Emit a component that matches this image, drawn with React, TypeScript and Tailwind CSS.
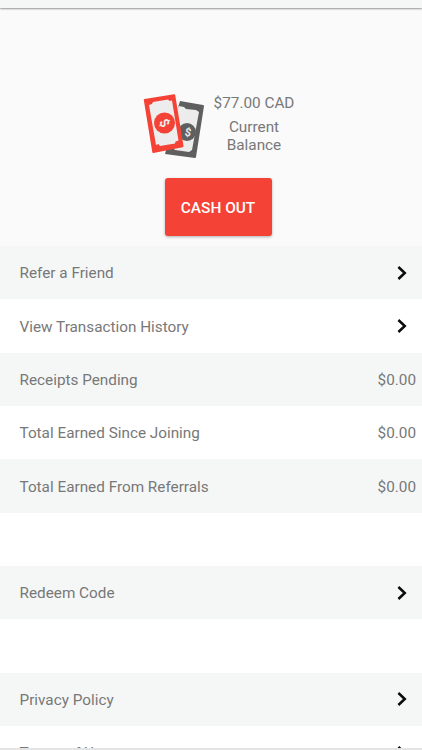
import React from "react";

function Chevron() {
  return (
    <svg width="12" height="16" viewBox="0 0 12 16" className="shrink-0">
      <path d="M2.4 2 L8.8 8 L2.4 14" fill="none" stroke="#0b0b0b" strokeWidth="2.5" />
    </svg>
  );
}

function Money() {
  return (
    <svg width="64" height="68" viewBox="0 0 64 68">
      <path d="M37 7 L60 11 Q61 11 61 12 L53 63 Q53 64 52 64 L22 60 L30 30 Z" fill="#5f5f5f" />
      <polygon points="36,12 41,13 43,15 53,16 56,18 49,56 46,58 32,56 30,54 26,30" fill="#ececec" />
      <circle cx="44" cy="38" r="9" fill="#5f5f5f" />
      <text x="45" y="42" fontSize="11" textAnchor="middle" fill="#ececec" fontFamily="Roboto, sans-serif" fontWeight="700" transform="rotate(10 45 38)">$</text>
      <path d="M1.5 5 L31 0.3 Q32 0.2 32.2 1 L40.5 52 Q40.6 53 39.6 53.2 L10.5 59 Q9.5 59.2 9.3 58.2 L0.8 6 Q0.7 5.2 1.5 5 Z" fill="#f44336" />
      <polygon points="6,11 9,10 10,8 25,5.5 26.5,7 29,6.5 35.5,46.5 32.5,47.5 32,49.5 17,52 15.5,50 13,51" fill="#ededed" />
      <circle cx="21.5" cy="29" r="10.5" fill="#f44336" />
      <text x="21.5" y="33.5" fontSize="13" textAnchor="middle" fill="#ededed" fontFamily="Roboto, sans-serif" fontWeight="700" transform="rotate(60 21.5 29)">$</text>
    </svg>
  );
}

function Row({ label, value, tinted }: { label: string; value?: string; tinted?: boolean }) {
  return (
    <div className={`flex h-[53.33px] items-center justify-between pl-[19.5px] ${value ? "pr-[6px]" : "pr-[14px]"} text-[15.3px] text-[#787878] ${tinted ? "bg-[#f5f7f7]" : "bg-white"}`}>
      <span className="pt-[2px]">{label}</span>
      {value ? <span className="pt-[2px]">{value}</span> : <Chevron />}
    </div>
  );
}

export default function App() {
  return (
    <div className="relative h-[750px] w-[422px] overflow-hidden bg-white font-['Roboto',sans-serif]">
      <div className="relative h-2 bg-[#f5f7f7] shadow-[0_1px_2px_rgba(0,0,0,0.4)]" />
      <div className="flex h-[238px] flex-col items-center bg-[#fafafa] pt-[86px] pl-[14px]">
        <div className="flex items-start gap-[8px]">
          <Money />
          <div className="flex w-[78px] flex-col items-center text-center text-[15.3px] leading-[18px] text-[#787878]">
            <span className="whitespace-nowrap">$77.00 CAD</span>
            <span className="mt-[6px]">Current</span>
            <span>Balance</span>
          </div>
        </div>
        <button className="mt-[16px] h-[58px] w-[107px] rounded-[3px] bg-[#f44336] pt-[3px] text-[15.4px] font-medium text-white shadow-[0_1px_3px_rgba(0,0,0,0.3)]">
          CASH OUT
        </button>
      </div>
      <Row label="Refer a Friend" tinted />
      <Row label="View Transaction History" />
      <Row label="Receipts Pending" value="$0.00" tinted />
      <Row label="Total Earned Since Joining" value="$0.00" />
      <Row label="Total Earned From Referrals" value="$0.00" tinted />
      <div className="h-[53.33px]" />
      <Row label="Redeem Code" tinted />
      <div className="h-[53.33px]" />
      <Row label="Privacy Policy" tinted />
      <Row label="Terms of Use" />
      <div className="absolute bottom-0 left-0 h-[2px] w-full bg-[#e4e4e4]" />
    </div>
  );
}
